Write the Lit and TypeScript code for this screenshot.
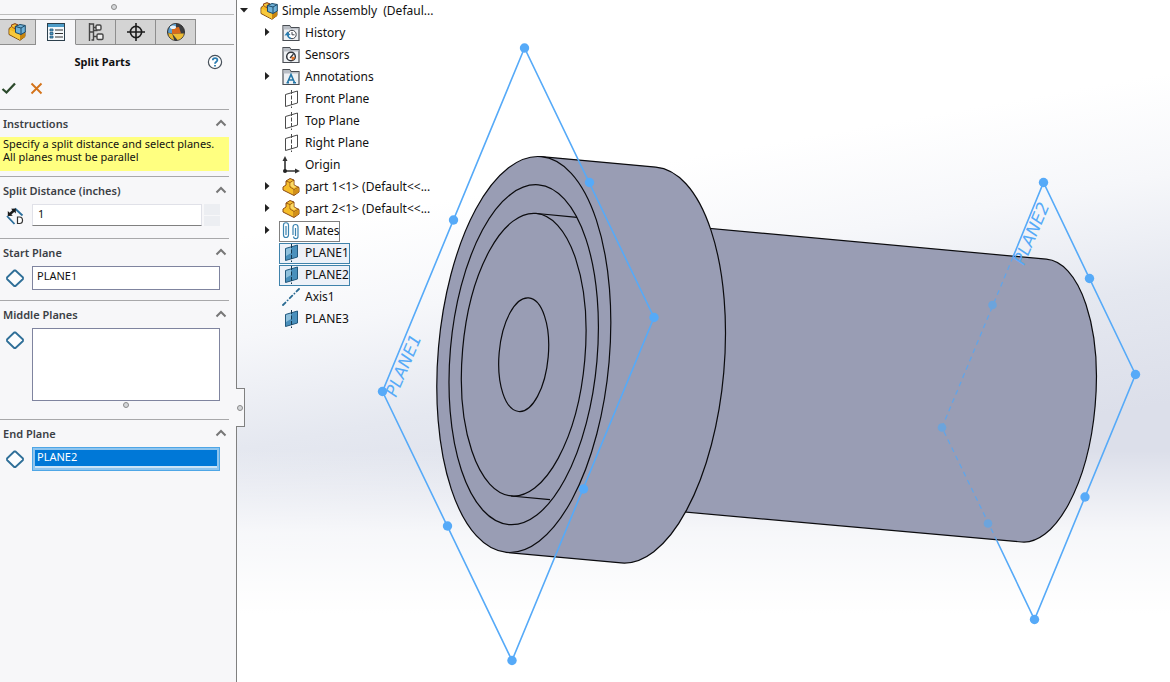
import { LitElement, html, svg, css } from "lit";
import { customElement } from "lit/decorators.js";
import { classMap } from "lit/directives/class-map.js";

const assemblyIcon = html`<svg class="icon" viewBox="0 0 18 18" aria-hidden="true">
  <path d="M1 5.500 3.500 3.500V2L7 .8l3 1.200 7 6v5.500L12 17.300 1 11.500z" fill="#f3b81f" stroke="#7a4a12"/>
  <path d="M1.500 6.500 12 12v5L1.500 11z" fill="#f8c93c"/>
  <path d="M12 12l5-2.500V14l-5 3z" fill="#c8860f"/>
  <path d="M3.500 3.500V2L7 .8l3 1.200-3 1.500V6z" fill="#f8c93c" stroke="#8a3a20" stroke-width=".8"/>
  <path d="M7.500 3.500 12 1.500l5.300 1v6.500L13 11.500l-5.500-2z" fill="#6fb1d8" stroke="#1d4a68"/>
  <path d="M7.500 3.500 13 5l4.300-2.500M13 5v6.500" fill="none" stroke="#1d4a68"/>
</svg>`;

const partIcon = html`<svg class="icon" viewBox="0 0 18 18" aria-hidden="true">
  <path d="M1 9l3-2V3l4-2.500 4 1.500v5l5 2.500V14l-5 3.500L1 12z" fill="#f5bd2a" stroke="#8a4a14"/>
  <path d="M4 3l4 1.500V9l4 2.500 5-2.500M8 4.500 12 2M12 11.500V17" fill="none" stroke="#8a4a14" stroke-width=".8"/>
  <path d="M12.500 12l4-2.300V14l-4 2.700z" fill="#d38f18"/>
  <path d="M8.500 5 11.500 3v4l2.500 1.500-2 1.500-3.500-2z" fill="#fbd968"/>
</svg>`;

const folder = (inner: unknown) => html`<svg class="icon" viewBox="0 0 18 18" aria-hidden="true">
  <path d="M1 16.500V1.500h6.500l1.500 2h8v13z" fill="#eef1f4" stroke="#4a4e54" stroke-width="1.200"/>
  <path d="M1.500 2h5.700l1.500 2h7.800v1.500h-15z" fill="#b9bec5"/>
  ${inner}
</svg>`;

const historyIcon = folder(svg`<circle cx="10" cy="10.500" r="4.200" fill="#fff" stroke="#40454c"/>
  <path d="M10 8v2.800h2.500" fill="none" stroke="#40454c"/>
  <path d="M9 14.500a4.500 4.500 0 0 1-3.300-4" fill="none" stroke="#2a7db0" stroke-width="1.600"/>
  <path d="M2.500 11.500 5.500 7.500 8.500 11z" fill="#2a7db0"/>`);
const sensorsIcon = folder(svg`<circle cx="9" cy="10.500" r="4.300" fill="#fff" stroke="#30353c" stroke-width="1.500"/>
  <path d="M9 10.500 13 11a4 4 0 0 1-3 3.500z" fill="#e2742a"/>
  <path d="M8 12l3.500-4" stroke="#30353c" stroke-width="1.200"/>`);
const annotationsIcon = folder(svg`<path d="M5.500 14.500 9 6.500l3.500 8M6.500 12h5M4.500 14.800h2.500M11 14.800h3" fill="none" stroke="#2477a8" stroke-width="1.600"/>`);

const planeIcon = html`<svg class="icon" viewBox="0 0 18 18" aria-hidden="true">
  <path d="M3.500 4.500v12l12-3.500V1z" fill="none" stroke="#4a4a4a"/>
  <path d="M9.500 0v18" stroke="#4a4a4a" stroke-dasharray="4 1.500"/>
</svg>`;
const planeSolidIcon = html`<svg class="icon" viewBox="0 0 18 18" aria-hidden="true">
  <path d="M3.500 4.500v12l12-3.500V1z" fill="#4a90bc" stroke="#23587c"/>
  <path d="M4 5l5-1.500V9L4 12z" fill="#8fc0dc"/>
  <path d="M9.500 0v18" stroke="#15384f" stroke-dasharray="4 1.500"/>
</svg>`;
const originIcon = html`<svg class="icon" viewBox="0 0 18 18" aria-hidden="true">
  <path d="M3 3v12h12" fill="none" stroke="#333" stroke-width="1.600"/>
  <path d="M3 0l2.500 5h-5zM18 15l-5-2.500v5z" fill="#333"/>
  <circle cx="3" cy="15" r="2" fill="#222"/>
</svg>`;
const matesIcon = html`<svg class="icon" viewBox="0 0 18 18" aria-hidden="true">
  <g fill="none" stroke="#3a83b0" stroke-width="1.200">
    <path d="M1.500 3.500v9.500a2.500 2.500 0 0 0 5 0V3a2.500 2.500 0 0 0-5 .5M4 4v9"/>
    <path d="M11 13V5a2.500 2.500 0 0 1 5 0V14.500a2.200 2.200 0 0 1-4.400 0M13.500 14V6"/>
  </g>
</svg>`;
const axisIcon = html`<svg class="icon" viewBox="0 0 18 18" aria-hidden="true">
  <path d="M1 17 17 1" stroke="#2a6b93" stroke-width="1.800" stroke-linecap="round" stroke-dasharray="3.500 3 .1 3"/>
</svg>`;

const propertyIcon = html`<svg class="icon" viewBox="0 0 18 18" aria-hidden="true">
  <rect x=".5" y=".5" width="17" height="17" fill="#f4f8fb" stroke="#2c3f4c"/>
  <path d="M1 1h16v3H1z" fill="#4d9cc8"/>
  <path d="M3 6h3v2H3zM3 9.500h3v2H3zM3 13h3v2H3z" fill="#4d9cc8" stroke="#23587c" stroke-width=".8"/>
  <path d="M8 7h8M8 10.500h8M8 14h8" stroke="#333"/>
</svg>`;
const configIcon = html`<svg class="icon" viewBox="0 0 18 18" aria-hidden="true">
  <g fill="none" stroke="#454545" stroke-width="1.400">
    <path d="M2.500 0v18M2.500 1h4v3.500h3M6.500 4.500v3h4M2.500 9h4v8h-2M6.500 13.500h3.500"/>
    <rect x="9" y="2" width="5" height="5" rx="1.200" fill="#eee"/>
    <rect x="10" y="11" width="6" height="5.500" rx="1.200" fill="#eee"/>
  </g>
</svg>`;
const targetIcon = html`<svg class="icon" viewBox="0 0 18 18" aria-hidden="true">
  <circle cx="9" cy="9" r="5.600" fill="none" stroke="#1c1c1c" stroke-width="1.600"/>
  <path d="M9 0v18M0 9h18" stroke="#1c1c1c" stroke-width="1.600"/>
</svg>`;
const appearanceIcon = html`<svg class="icon" viewBox="0 0 18 18" aria-hidden="true">
  <circle cx="9" cy="9" r="8.500" fill="#3c3d40" stroke="#333"/>
  <path d="M9 .8A8.200 8.200 0 0 0 1 9.500l4 1L9 5z" fill="#5a9fd0"/>
  <path d="M5 5l7-1 2 6.500-9 .5z" fill="#d96a1c"/>
  <path d="M5.500 11l9-.5 2.500 0a8.200 8.200 0 0 1-6.500 6.500z" fill="#edbc35"/>
  <path d="M1.200 10l4 1 2 6a8.200 8.200 0 0 1-6-7z" fill="#e9b62c"/>
  <ellipse cx="6" cy="4.200" rx="3" ry="1.800" fill="#e7f3fb"/>
</svg>`;
const diamondIcon = html`<svg class="icon" viewBox="0 0 18 18" aria-hidden="true">
  <path d="M8.200 1.500h1.300l7.500 7v1.500l-7.500 7H8.200l-7.200-7V8.500z" fill="#fcfdfe" stroke="#2f6f98" stroke-width="1.800" stroke-linejoin="round"/>
</svg>`;
const distanceIcon = html`<svg class="icon" viewBox="0 0 18 18" aria-hidden="true">
  <path d="M9 1.500l7.500 7M1 9l7.500 8" stroke="#2c6f9c" stroke-width="1.800"/>
  <path d="M3.500 7.500 8.500 3" stroke="#1a1a1a" stroke-width="2.400"/>
  <path d="M9.800 1.500v5L5 1.800zM1.800 9V4l5 4.800z" fill="#1a1a1a"/>
  <path d="M11.500 10h2c4 0 4 6.500 0 6.500h-2z" fill="#fff" stroke="#333" stroke-width="1.200"/>
</svg>`;
const chevron = html`<svg class="chevron" viewBox="0 0 12 8" aria-hidden="true">
  <path d="M1.500 6.500 6 2l4.500 4.500" fill="none" stroke="#777" stroke-width="2"/>
</svg>`;

interface TreeItem {
  label: string;
  icon: unknown;
  expandable?: boolean;
  state?: "framed" | "selected";
}

const treeItems: TreeItem[] = [
  { label: "History", icon: historyIcon, expandable: true },
  { label: "Sensors", icon: sensorsIcon },
  { label: "Annotations", icon: annotationsIcon, expandable: true },
  { label: "Front Plane", icon: planeIcon },
  { label: "Top Plane", icon: planeIcon },
  { label: "Right Plane", icon: planeIcon },
  { label: "Origin", icon: originIcon },
  { label: "part 1<1> (Default<<...", icon: partIcon, expandable: true },
  { label: "part 2<1> (Default<<...", icon: partIcon, expandable: true },
  { label: "Mates", icon: matesIcon, expandable: true, state: "framed" },
  { label: "PLANE1", icon: planeSolidIcon, state: "selected" },
  { label: "PLANE2", icon: planeSolidIcon, state: "selected" },
  { label: "Axis1", icon: axisIcon },
  { label: "PLANE3", icon: planeSolidIcon },
];

@customElement("split-section")
class SplitSection extends LitElement {
  static properties = { heading: {} };
  declare heading: string;
  static styles = css`
    :host { display: block; border-top: 1px solid #a8a8aa; }
    .head { display: flex; align-items: center; justify-content: space-between; height: 27px; padding: 0 2px 0 3px; }
    h2 { margin: 0; font-size: 11px; line-height: 16px; font-weight: 600; color: #3b4045; }
    button { border: 0; background: none; padding: 0 0 2px; width: 12px; height: 12px; display: grid; place-items: center; }
    .chevron { width: 12px; height: 8px; display: block; }
  `;
  render() {
    return html`<div class="head"><h2>${this.heading}</h2>
      <button aria-label="Collapse ${this.heading}">${chevron}</button></div><slot></slot>`;
  }
}

@customElement("model-scene")
class ModelScene extends LitElement {
  static styles = css`
    :host { display: block; }
    svg { display: block; width: 100%; height: 100%; }
    .solid { fill: #999db4; stroke: #0b0b0e; stroke-width: 1.2; }
    .edge { fill: none; stroke: #0b0b0e; stroke-width: 1.2; }
    .plane { fill: none; stroke: #56aaf8; stroke-width: 1.6; }
    .hidden { fill: none; stroke: #62a5e8; stroke-width: 1.3; stroke-dasharray: 5 4; }
    .dot { fill: #56aaf8; }
    .buried { fill: #6ca4dc; }
    .name { font: italic 17px "DejaVu Sans", sans-serif; fill: #56aaf8; }
  `;
  render() {
    const dots = [[524.5, 48], [453.500, 220], [382.500, 391.500], [447.500, 526], [512, 660.500], [583.500, 489], [654, 317.500], [589.500, 182.500],
      [1043.500, 182.500], [1089.500, 278.500], [1135.500, 374.500], [1085, 497], [1034.500, 619.500]];
    const buried = [[992.500, 305], [942, 427.500], [988, 523.500]];
    const rings = [[73.500, 170.500], [61.300, 141.800], [24.600, 57]];
    return html`<svg viewBox="237 0 933 682" preserveAspectRatio="xMinYMin meet" role="img" aria-label="Assembly model">
      <path class="solid" d="M640 222 1046.400 259.200A61.300 141.800 5 0 1 1021.600 542L640 508z"/>
      <path class="solid" d="M541.100 156.600 655.800 167.100A85.600 198.600 5 0 1 621.200 562.900L506.500 552.400z"/>
      <ellipse class="solid" cx="523.800" cy="354.500" rx="85.600" ry="198.600" transform="rotate(5 523.800 354.500)"/>
      ${rings.map(([rx, ry]) => svg`<ellipse class="edge" cx="523.700" cy="354.700" rx=${rx} ry=${ry} transform="rotate(5 523.700 354.700)"/>`)}
      <path class="edge" d="M537 213.500 577 217.300M511 496 550 499.700"/>
      <path class="plane" d="M524.500 48 382.500 391.500 512 660.500 654 317.500z"/>
      <path class="plane" d="M1013 257 1043.500 182.500 1135.500 374.500 1034.500 619.500 997 541"/>
      <path class="hidden" d="M1013 257 942 427.500 997 541"/>
      ${dots.map(([x, y]) => svg`<circle class="dot" cx=${x} cy=${y} r="4.700"/>`)}
      ${buried.map(([x, y]) => svg`<circle class="buried" cx=${x} cy=${y} r="4.300"/>`)}
      <text class="name" transform="translate(396 398) rotate(-67)">PLANE1</text>
      <text class="name" transform="translate(1024 266) rotate(-67)">PLANE2</text>
    </svg>`;
  }
}

@customElement("app-root")
class AppRoot extends LitElement {
  static styles = css`
    :host { display: flex; min-height: 100vh; font: 12px/16px "Noto Sans", "Open Sans", sans-serif; color: #111; }
    * { box-sizing: border-box; }
    button, input, textarea { font: inherit; color: inherit; margin: 0; }
    .icon { display: block; width: 18px; height: 18px; flex: none; }
    .panel { position: relative; flex: none; width: 237px; background: #f7f7f9; border-right: 1px solid #808080; }
    .grip { display: flex; justify-content: center; align-items: center; height: 15px; padding-right: 6px; border-bottom: 1px solid #bcbcbc; margin-right: 2px; }
    .knob { width: 6px; height: 6px; border-radius: 50%; border: 1px solid #8a8a8a; background: #d5d7da; }
    .tabs { display: flex; margin: 4px 2px 0 0; height: 26px; border-bottom: 1px solid #a0a0a0; }
    .tab { width: 40px; height: 26px; display: grid; place-items: center; padding: 0; border: 1px solid #8e8e8e; border-left: 0; background: #d4d4d4; }
    .tab.first { width: 36px; padding-right: 2px; }
    .tab.active { background: #f7f7f9; border-color: #a0a0a0 #8e8e8e #f7f7f9 #f7f7f9; }
    .title { display: grid; grid-template-columns: 1fr 16px; align-items: center; height: 33px; padding: 0 13px 0 0; }
    h1 { margin: 0; padding-right: 2px; text-align: center; font-size: 11px; line-height: 16px; font-weight: 700; color: #111; }
    .bare { border: 0; background: none; padding: 0; display: grid; place-items: center; }
    .help { width: 16px; height: 16px; }
    .actions { display: flex; gap: 12px; height: 31px; padding: 2px 0 0 1px; align-items: flex-start; }
    .actions .bare { width: 16px; height: 16px; }
    .sections { margin-right: 7px; }
    .note { margin: 0 0 5px; padding: 0 3px 8px; background: #ffff80; font-size: 11px; line-height: 13px; white-space: nowrap; }
    .field { display: grid; grid-template-columns: 18px 1fr; column-gap: 8px; align-items: start; padding: 0 9px 10px 6px; }
    .field .icon { margin-top: 3px; }
    input, textarea { display: block; width: 100%; min-width: 0; height: 24px; border: 1px solid #7f849f; border-radius: 0; background: #fff; padding: 0 4px 5px; outline: 0; font-size: 11px; }
    .distance { padding-bottom: 12px; }
    .stepper { display: flex; gap: 2px; }
    .stepper input { flex: 1; height: 22px; border: 1px solid #e0e1e8; border-bottom-color: #808080; padding: 0 5px 3px; }
    .spin { display: grid; gap: 1px; width: 16px; flex: none; }
    .spin button { border: 0; padding: 0; background: #eceef2; }
    textarea { height: 73px; resize: none; }
    .middle { padding-bottom: 0; }
    .resize { display: flex; justify-content: center; height: 18px; padding: 1px 0 0 23px; }
    .picked { color: #fff; border-color: #4ea6e6; background: linear-gradient(#0078d7 18px, #cce4f7 18px); box-shadow: inset 0 0 0 2px #8fc5ef; }
    .splitter { position: absolute; left: 236px; top: 388px; width: 9px; height: 39px; padding: 0; border: 1px solid #808080; border-left: 0; background: #f7f7f9; display: grid; place-items: center; z-index: 2; }
    .view { position: relative; flex: 1; min-width: 0; background:
      linear-gradient(rgba(255,255,255,0) 66%, rgba(255,255,255,.75) 78%, #fff 90%),
      linear-gradient(170deg, #fff 28%, #f6f7fa 40%, #e5e8f0 53%, #dcdfea 67%); }
    model-scene { position: absolute; inset: 0; }
    .tree { position: relative; margin: 0; padding: 0; list-style: none; width: 220px; }
    .row { display: flex; align-items: center; height: 22px; white-space: pre; }
    .row.child { padding-left: 26px; }
    .twisty { width: 16px; height: 16px; padding: 0 0 2px; border: 0; background: none; display: grid; place-items: center start; flex: none; }
    .root .twisty { width: 20px; margin-left: 3px; }
    .entry { display: flex; align-items: center; gap: 5px; height: 21px; padding: 0 0 0 2px; border: 1px solid transparent; }
    .root .entry { padding: 0; border: 0; gap: 4px; }
    .framed { border-color: #808080; background: #fff; }
    .selected { border-color: #3f82ab; background: #edf1f8; }
  `;

  render() {
    return html`
      <aside class="panel">
        <div class="grip"><span class="knob"></span></div>
        <nav class="tabs">
          <button class="tab first" aria-label="Feature tree">${assemblyIcon}</button>
          <button class="tab active" aria-label="Properties">${propertyIcon}</button>
          <button class="tab" aria-label="Configurations">${configIcon}</button>
          <button class="tab" aria-label="Dimensions">${targetIcon}</button>
          <button class="tab" aria-label="Appearances">${appearanceIcon}</button>
        </nav>
        <div class="title">
          <h1>Split Parts</h1>
          <button class="bare help" aria-label="Help">
            <svg width="16" height="16" viewBox="0 0 16 16"><circle cx="8" cy="8" r="6.600" fill="#fff" stroke="#47505a" stroke-width="1.200"/>
              <path d="M5.800 6.300c0-3 4.600-2.800 4.600-.2C10.400 7.800 8 7.600 8 9.800M8 11v1.600" fill="none" stroke="#2c7cb0" stroke-width="1.800"/></svg>
          </button>
        </div>
        <div class="actions">
          <button class="bare" aria-label="OK"><svg width="16" height="16" viewBox="0 0 16 16"><path d="M1.500 9 5.500 12.500 14 3.500" fill="none" stroke="#2c4a2c" stroke-width="2.300"/></svg></button>
          <button class="bare" aria-label="Cancel"><svg width="16" height="16" viewBox="0 0 16 16"><path d="M2.500 3.500l10 10M12.500 3.500l-10 10" stroke="#d4731a" stroke-width="1.900"/></svg></button>
        </div>
        <div class="sections">
          <split-section .heading=${"Instructions"}>
            <p class="note">Specify a split distance and select planes.<br>All planes must be parallel</p>
          </split-section>
          <split-section .heading=${"Split Distance (inches)"}>
            <div class="field distance">${distanceIcon}
              <div class="stepper">
                <input aria-label="Split Distance (inches)" value="1">
                <div class="spin"><button aria-label="Increase"></button><button aria-label="Decrease"></button></div>
              </div>
            </div>
          </split-section>
          <split-section .heading=${"Start Plane"}>
            <div class="field">${diamondIcon}<input aria-label="Start Plane" value="PLANE1"></div>
          </split-section>
          <split-section .heading=${"Middle Planes"}>
            <div class="field middle">${diamondIcon}<textarea aria-label="Middle Planes"></textarea></div>
            <div class="resize"><span class="knob"></span></div>
          </split-section>
          <split-section .heading=${"End Plane"}>
            <div class="field">${diamondIcon}<input class="picked" aria-label="End Plane" value="PLANE2"></div>
          </split-section>
        </div>
        <button class="splitter" aria-label="Collapse panel"><span class="knob"></span></button>
      </aside>
      <main class="view">
        <model-scene></model-scene>
        <ul class="tree">
          <li class="row root">
            <button class="twisty" aria-label="Collapse"><svg width="8" height="5" viewBox="0 0 8 5"><path d="M0 0h8L4 4.500z" fill="#222"/></svg></button>
            <span class="entry">${assemblyIcon}<span>Simple Assembly  (Defaul...</span></span>
          </li>
          ${treeItems.map((item) => html`<li class="row child">
            ${item.expandable
              ? html`<button class="twisty" aria-label="Expand"><svg width="8" height="8" viewBox="0 0 8 8"><path d="M2 0 6.500 4 2 8z" fill="#222"/></svg></button>`
              : html`<span class="twisty"></span>`}
            <span class=${classMap({ entry: true, framed: item.state === "framed", selected: item.state === "selected" })}>${item.icon}<span>${item.label}</span></span>
          </li>`)}
        </ul>
      </main>`;
  }
}
